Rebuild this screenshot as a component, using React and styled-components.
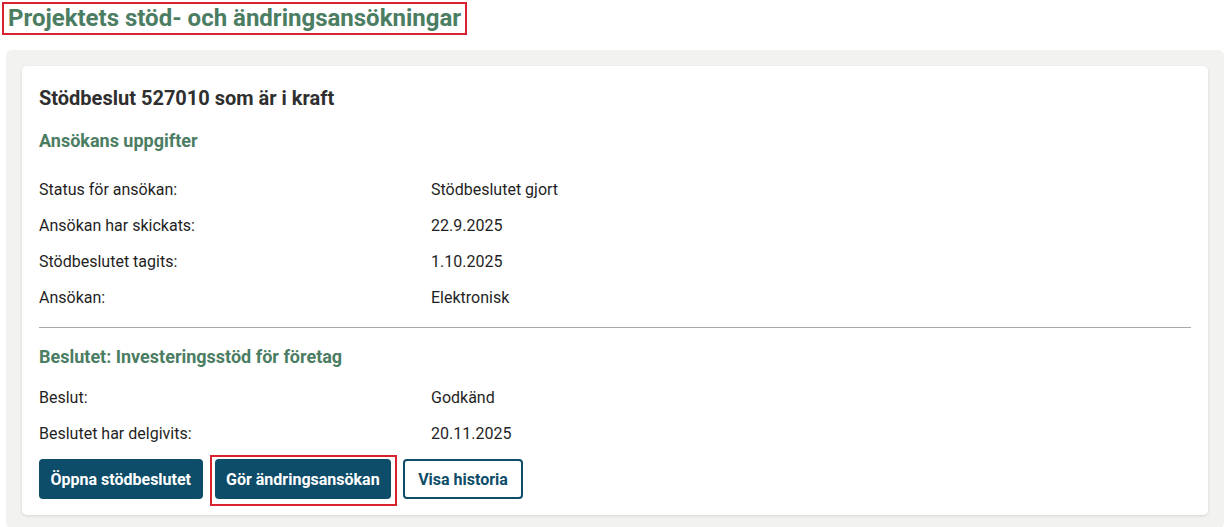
import React from 'react'
import styled, { createGlobalStyle } from 'styled-components'

const Global = createGlobalStyle`
  body {
    margin: 0;
    background: #fff;
    font-family: Roboto, "Liberation Sans", sans-serif;
    color: #222;
  }
`

const Page = styled.div`
  padding: 2px 8px 0 2px;
`

const Title = styled.h1`
  display: inline-block;
  margin: 0;
  padding: 1px 4px 2px 4px;
  border: 2px solid #d8232f;
  font-size: 24px;
  line-height: 26px;
  font-weight: 700;
  color: #4b7d63;
`

const Panel = styled.div`
  margin: 15px 0 0 4px;
  background: #f2f2f0;
  border-radius: 6px;
  padding: 16px 16px 14px 16px;
`

const Card = styled.div`
  background: #fff;
  border-radius: 5px;
  box-shadow: 0 1px 3px rgba(0, 0, 0, 0.12);
  padding: 20px 17px 16px 17px;
`

const CardTitle = styled.h2`
  margin: 0;
  font-size: 20px;
  line-height: 24px;
  font-weight: 700;
  color: #2f2f2f;
`

const Section = styled.h3`
  margin: ${p => p.$top}px 0 ${p => p.$bottom}px;
  font-size: 18px;
  line-height: 24px;
  font-weight: 700;
  color: #4b7d63;
`

const Rows = styled.div`
  display: flex;
  flex-direction: column;
`

const Row = styled.div`
  display: grid;
  grid-template-columns: 392px 1fr;
  font-size: 16px;
  line-height: 36px;
  color: #1f1f1f;
`

const Divider = styled.hr`
  margin: 11px 0 0;
  border: none;
  border-top: 1px solid #a9a9a9;
`

const Actions = styled.div`
  display: flex;
  align-items: center;
  gap: 12px;
  margin-top: 7px;
`

const Highlight = styled.div`
  border: 2px solid #d8232f;
  padding: 2px 4px 5px 3px;
  margin: -4px -6px -7px -5px;
`

const Button = styled.button`
  font-family: Roboto, "Liberation Sans", sans-serif;
  font-size: 16px;
  font-weight: 700;
  height: 40px;
  padding: 0 ${p => (p.$outline ? 13 : 11.5)}px;
  border-radius: 4px;
  cursor: pointer;
  border: ${p => (p.$outline ? '2px solid #0e4d69' : 'none')};
  background: ${p => (p.$outline ? '#fff' : '#0e4d69')};
  color: ${p => (p.$outline ? '#0e4d69' : '#fff')};
`

const first = [
  ['Status för ansökan:', 'Stödbeslutet gjort'],
  ['Ansökan har skickats:', '22.9.2025'],
  ['Stödbeslutet tagits:', '1.10.2025'],
  ['Ansökan:', 'Elektronisk'],
]

const second = [
  ['Beslut:', 'Godkänd'],
  ['Beslutet har delgivits:', '20.11.2025'],
]

export default function App() {
  return (
    <Page>
      <Global />
      <Title>Projektets stöd- och ändringsansökningar</Title>
      <Panel>
        <Card>
          <CardTitle>Stödbeslut 527010 som är i kraft</CardTitle>
          <Section $top={19} $bottom={19}>Ansökans uppgifter</Section>
          <Rows>
            {first.map(([k, v]) => (
              <Row key={k}>
                <span>{k}</span>
                <span>{v}</span>
              </Row>
            ))}
          </Rows>
          <Divider />
          <Section $top={17} $bottom={11}>Beslutet: Investeringsstöd för företag</Section>
          <Rows>
            {second.map(([k, v]) => (
              <Row key={k}>
                <span>{k}</span>
                <span>{v}</span>
              </Row>
            ))}
          </Rows>
          <Actions>
            <Button>Öppna stödbeslutet</Button>
            <Highlight>
              <Button>Gör ändringsansökan</Button>
            </Highlight>
            <Button $outline>Visa historia</Button>
          </Actions>
        </Card>
      </Panel>
    </Page>
  )
}
